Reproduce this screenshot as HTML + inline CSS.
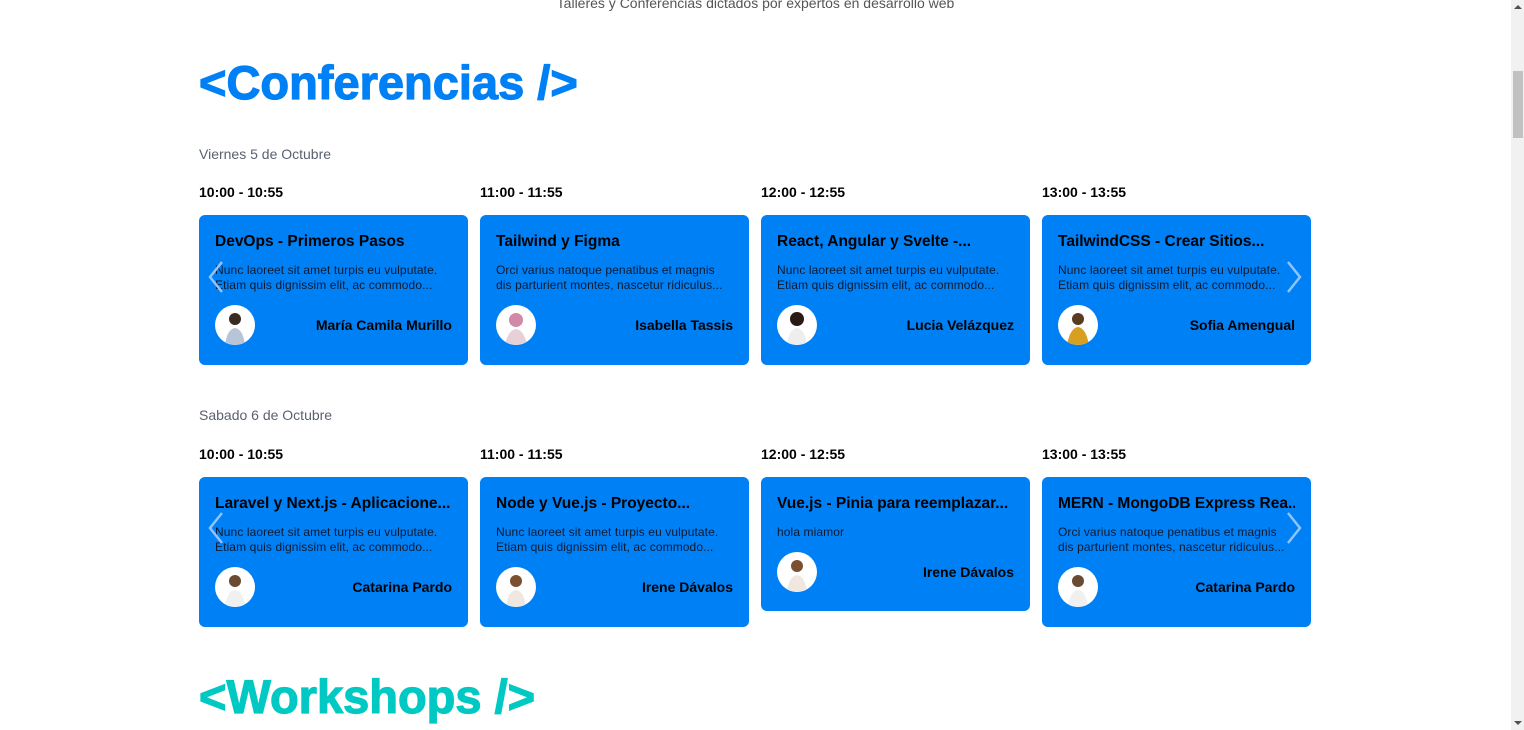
<!DOCTYPE html>
<html><head><meta charset="utf-8"><style>
*{box-sizing:border-box;margin:0;padding:0}
html,body{width:1524px;height:730px;overflow:hidden;background:#fff;font-family:"Liberation Sans",sans-serif;color:#000}
.sub{position:absolute;top:-5px;left:0;width:1511px;text-align:center;font-size:14px;color:#555}
h2{position:absolute;left:199px;font-size:47px;font-weight:bold;letter-spacing:0;line-height:1;-webkit-text-stroke:1.2px currentColor}
.day{position:absolute;left:199px;font-size:14px;color:#5a6270}
.time{position:absolute;font-size:14px;font-weight:bold}
.card{position:absolute;width:269px;background:#0080f5;border-radius:6px;padding:16px}
.card .t{font-size:15.5px;font-weight:bold;margin-top:2px;white-space:nowrap;overflow:hidden}
.card .d{font-size:12px;line-height:15px;color:#101a30;margin-top:12px;height:30px;letter-spacing:0.1px}
.card .f{display:flex;justify-content:space-between;align-items:center;margin-top:12px}
.av{width:40px;height:40px;border-radius:50%;background:#fff;overflow:hidden}
.card .n{font-size:14px;font-weight:bold}
.chev{position:absolute}
.sb{position:absolute;left:1511px;top:0;width:13px;height:730px;background:#f1f1f1}
.th{position:absolute;left:1513px;top:71px;width:10px;height:67px;background:#c1c1c1}
</style></head><body>
<div class="sub">Talleres y Conferencias dictados por expertos en desarrollo web</div>
<h2 style="top:59px;color:#0080f5">&lt;Conferencias /&gt;</h2>
<div class="day" style="top:146px">Viernes 5 de Octubre</div>
<div class="time" style="left:199px;top:184px">10:00 - 10:55</div>
<div class="time" style="left:480px;top:184px">11:00 - 11:55</div>
<div class="time" style="left:761px;top:184px">12:00 - 12:55</div>
<div class="time" style="left:1042px;top:184px">13:00 - 13:55</div>

<div class="card" style="left:199px;top:215px;height:150px"><div class="t">DevOps - Primeros Pasos</div><div class="d">Nunc laoreet sit amet turpis eu vulputate. Etiam quis dignissim elit, ac commodo...</div><div class="f"><div class="av"><svg width="40" height="40"><circle cx="20" cy="14" r="6" fill="#3a2a20"/><path d="M10 40 Q12 24 20 23 Q28 24 30 40Z" fill="#b8c4d8"/></svg></div><div class="n">María Camila Murillo</div></div></div>
<div class="card" style="left:480px;top:215px;height:150px"><div class="t">Tailwind y Figma</div><div class="d">Orci varius natoque penatibus et magnis dis parturient montes, nascetur ridiculus...</div><div class="f"><div class="av"><svg width="40" height="40"><circle cx="20" cy="15" r="7" fill="#d08aa8"/><path d="M9 40 Q12 25 20 24 Q28 25 31 40Z" fill="#e8d0d8"/></svg></div><div class="n">Isabella Tassis</div></div></div>
<div class="card" style="left:761px;top:215px;height:150px"><div class="t">React, Angular y Svelte -...</div><div class="d">Nunc laoreet sit amet turpis eu vulputate. Etiam quis dignissim elit, ac commodo...</div><div class="f"><div class="av"><svg width="40" height="40"><circle cx="20" cy="14" r="7" fill="#2a1a14"/><path d="M10 40 Q12 24 20 23 Q28 24 30 40Z" fill="#eee"/></svg></div><div class="n">Lucia Velázquez</div></div></div>
<div class="card" style="left:1042px;top:215px;height:150px"><div class="t">TailwindCSS - Crear Sitios...</div><div class="d">Nunc laoreet sit amet turpis eu vulputate. Etiam quis dignissim elit, ac commodo...</div><div class="f"><div class="av"><svg width="40" height="40"><circle cx="20" cy="14" r="6" fill="#5a3a20"/><path d="M9 40 Q12 23 20 22 Q28 23 31 40Z" fill="#d8a020"/></svg></div><div class="n">Sofia Amengual</div></div></div>

<div class="day" style="top:407px">Sabado 6 de Octubre</div>
<div class="time" style="left:199px;top:446px">10:00 - 10:55</div>
<div class="time" style="left:480px;top:446px">11:00 - 11:55</div>
<div class="time" style="left:761px;top:446px">12:00 - 12:55</div>
<div class="time" style="left:1042px;top:446px">13:00 - 13:55</div>

<div class="card" style="left:199px;top:477px;height:150px"><div class="t">Laravel y Next.js - Aplicacione...</div><div class="d">Nunc laoreet sit amet turpis eu vulputate. Etiam quis dignissim elit, ac commodo...</div><div class="f"><div class="av"><svg width="40" height="40"><circle cx="20" cy="14" r="6" fill="#6a4a30"/><path d="M10 40 Q12 24 20 23 Q28 24 30 40Z" fill="#f0f0f0"/></svg></div><div class="n">Catarina Pardo</div></div></div>
<div class="card" style="left:480px;top:477px;height:150px"><div class="t">Node y Vue.js - Proyecto...</div><div class="d">Nunc laoreet sit amet turpis eu vulputate. Etiam quis dignissim elit, ac commodo...</div><div class="f"><div class="av"><svg width="40" height="40"><circle cx="20" cy="14" r="6" fill="#7a5030"/><path d="M10 40 Q12 24 20 23 Q28 24 30 40Z" fill="#f0e8e0"/></svg></div><div class="n">Irene Dávalos</div></div></div>
<div class="card" style="left:761px;top:477px;height:134px"><div class="t">Vue.js - Pinia para reemplazar...</div><div class="d" style="height:15px">hola miamor</div><div class="f"><div class="av"><svg width="40" height="40"><circle cx="20" cy="14" r="6" fill="#7a5030"/><path d="M10 40 Q12 24 20 23 Q28 24 30 40Z" fill="#f0e8e0"/></svg></div><div class="n">Irene Dávalos</div></div></div>
<div class="card" style="left:1042px;top:477px;height:150px"><div class="t">MERN - MongoDB Express Rea...</div><div class="d">Orci varius natoque penatibus et magnis dis parturient montes, nascetur ridiculus...</div><div class="f"><div class="av"><svg width="40" height="40"><circle cx="20" cy="14" r="6" fill="#6a4a30"/><path d="M10 40 Q12 24 20 23 Q28 24 30 40Z" fill="#f0f0f0"/></svg></div><div class="n">Catarina Pardo</div></div></div>

<svg class="chev" style="left:206px;top:260px" width="20" height="34"><path d="M16 2 L4 17 L16 32" stroke="#8fc4ff" stroke-width="2.5" fill="none"/></svg>
<svg class="chev" style="left:1284px;top:260px" width="20" height="34"><path d="M4 2 L16 17 L4 32" stroke="#8fc4ff" stroke-width="2.5" fill="none"/></svg>
<svg class="chev" style="left:206px;top:511px" width="20" height="34"><path d="M16 2 L4 17 L16 32" stroke="#8fc4ff" stroke-width="2.5" fill="none"/></svg>
<svg class="chev" style="left:1284px;top:511px" width="20" height="34"><path d="M4 2 L16 17 L4 32" stroke="#8fc4ff" stroke-width="2.5" fill="none"/></svg>

<h2 style="top:673px;color:#00c9c3">&lt;Workshops /&gt;</h2>
<div class="sb"></div><div class="th"></div>
<svg style="position:absolute;left:1514px;top:4px" width="8" height="6"><path d="M0 5 L4 1 L8 5Z" fill="#505050"/></svg>
<svg style="position:absolute;left:1514px;top:720px" width="8" height="6"><path d="M0 1 L4 5 L8 1Z" fill="#505050"/></svg>
</body></html>
